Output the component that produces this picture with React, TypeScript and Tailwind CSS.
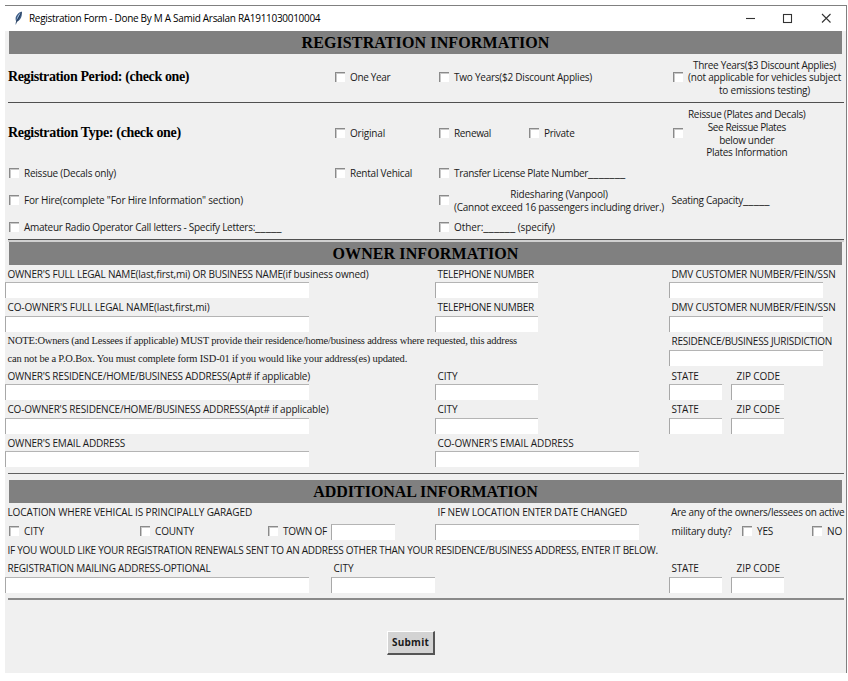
import type { ReactNode } from "react";

function Label({ children, t = "tracking-[-0.2px]", className = "" }: { children: ReactNode; t?: string; className?: string }) {
  return <div className={`whitespace-nowrap ${className.includes("leading-") ? "" : "leading-[12.6px]"} ${t} ${className}`}>{children}</div>;
}

function Box() {
  return <span className="mb-[2px] block h-[10px] w-[10px] shrink-0 border-t border-l border-[#8a8a8a] bg-white shadow-[inset_1px_1px_0_#c9c9c9]" />;
}

function Check({ children, t = "tracking-[-0.2px]", className = "" }: { children: ReactNode; t?: string; className?: string }) {
  return (
    <label className={`flex items-center gap-[5px] pl-1 ${className}`}>
      <Box />
      <Label t={t} className="text-center">{children}</Label>
    </label>
  );
}

function Blank({ n }: { n: string }) {
  return <span className="text-[12px] leading-none tracking-[0.08px]">{n}</span>;
}

function Field({ w }: { w: string }) {
  return <input className={`block h-4 border-t border-l border-t-[#b4b4b4] border-l-[#a8a8a8] bg-white px-1 outline-none ${w}`} />;
}

function Heading({ children, t }: { children: ReactNode; t: string }) {
  return (
    <h2 className={`mr-[4px] ml-[4px] flex h-[23px] items-center justify-center bg-[#808080] font-['Liberation_Serif',serif] text-[16px] font-bold text-black ${t}`}>
      {children}
    </h2>
  );
}

const cols = "grid grid-cols-[326px_104px_234px_62px_1fr]";

function Row({ h, children }: { h: string; children: ReactNode }) {
  return <div className={`${cols} ${h} items-center`}>{children}</div>;
}

function Rule({ c }: { c: string }) {
  return <div className={`mr-[2px] ml-[3px] ${c}`} />;
}

export default function App() {
  return (
    <div className="h-[681px] w-[848px] overflow-hidden bg-white pt-[5px] pl-[5px] font-['Open_Sans','Noto_Sans',sans-serif] text-[10px] text-[#1a1a1a]">
      <div className="flex h-[668px] w-[842px] flex-col border-t border-r border-[#808080] bg-[#f0f0f0]">
        <header className="flex h-[25px] shrink-0 items-center bg-white pl-[9px]">
          <svg width="9" height="14" viewBox="0 0 9 14" className="-mt-px mr-[6px] shrink-0">
            <path d="M7.6 0.6C4.6 1.4 1.8 4.6 1.6 7.4c-.1 1.2.1 2 .6 2.8L1.4 13.4l.7-.1.8-2.6C5.6 10 7.2 7.2 7.7 4.6 8 3 8 1.6 7.6.6z" fill="#3d5c85" />
            <path d="M7 1.4C4.8 2.8 3 5.4 2.5 9.4 3.8 7 5.6 4.6 7 1.4z" fill="#a9c4e4" />
            <path d="M7.4 1.2C6 5 4 8 2.2 11.6" stroke="#16263c" strokeWidth=".7" fill="none" />
          </svg>
          <Label t="tracking-[-0.3px]" className="text-black">Registration Form - Done By M A Samid Arsalan RA1911030010004</Label>
          <svg width="88" height="12" viewBox="0 0 88 12" className="-mt-[2px] mr-[13px] ml-auto shrink-0" fill="none" stroke="#333" strokeWidth="1.1">
            <path d="M1 6.5h9" />
            <rect x="38.500" y="2.500" width="8" height="8" />
            <path d="M77 2l8.500 8.500M85.500 2L77 10.500" />
          </svg>
        </header>

        <Heading t="tracking-[0.12px]">REGISTRATION INFORMATION</Heading>
        <Row h="h-[47px]">
          <Label t="tracking-[-0.38px]" className="pl-[3px] font-['Liberation_Serif',serif] text-[14px] font-bold text-black">Registration Period: (check one)</Label>
          <Check t="tracking-[-0.35px]">One Year</Check>
          <Check t="tracking-[-0.24px]">Two Years($2 Discount Applies)</Check>
          <Check className="col-span-2">
            <span className="tracking-[-0.308px]">Three Years($3 Discount Applies)</span><br />
            <span className="tracking-[-0.207px]">(not applicable for vehicles subject</span><br />
            <span className="tracking-[-0.223px]">to emissions testing)</span>
          </Check>
        </Row>
        <Rule c="mt-px h-px bg-[#505050]" />
        <Row h="h-[61px]">
          <Label t="tracking-[-0.33px]" className="pl-[3px] font-['Liberation_Serif',serif] text-[14px] font-bold text-black">Registration Type: (check one)</Label>
          <Check t="tracking-[-0.195px]">Original</Check>
          <div className="flex">
            <Check t="tracking-[-0.338px]" className="w-[90px]">Renewal</Check>
            <Check t="tracking-[-0.265px]">Private</Check>
          </div>
          <Check className="col-span-2">
            <span className="tracking-[-0.301px]">Reissue (Plates and Decals)</span><br />
            <span className="tracking-[-0.419px]">See Reissue Plates</span><br />
            <span className="tracking-[-0.337px]">below under</span><br />
            <span className="tracking-[-0.282px]">Plates Information</span>
          </Check>
        </Row>
        <Row h="h-[19px]">
          <Check t="tracking-[-0.232px]">Reissue (Decals only)</Check>
          <Check t="tracking-[-0.233px]">Rental Vehical</Check>
          <Check t="tracking-[-0.331px]">Transfer License Plate Number<Blank n="_______" /></Check>
        </Row>
        <Row h="h-[35px]">
          <Check t="tracking-[-0.203px]" className="col-span-2">For Hire(complete "For Hire Information" section)</Check>
          <Check>
            <span className="tracking-[-0.209px]">Ridesharing (Vanpool)</span><br />
            <span className="tracking-[-0.26px]">(Cannot exceed 16 passengers including driver.)</span>
          </Check>
          <Label t="tracking-[-0.3px]" className="col-span-2 pl-[2.500px]">Seating Capacity<Blank n="_____" /></Label>
        </Row>
        <Row h="h-[19px]">
          <Check t="tracking-[-0.273px]" className="col-span-2">Amateur Radio Operator Call letters - Specify Letters:<Blank n="_____" /></Check>
          <Check t="tracking-[-0.1px]">Other:<Blank n="______" /> (specify)</Check>
        </Row>
        <div className="h-[2px] shrink-0" />
        <Rule c="h-px bg-[#505050]" />
        <Rule c="h-[2px] bg-[#d0d0d0]" />

        <Heading t="tracking-[0.11px]">OWNER INFORMATION</Heading>
        <Row h="h-[17px] pt-px">
          <Label t="tracking-[-0.201px]" className="col-span-2 pl-[2.500px]">OWNER'S FULL LEGAL NAME(last,first,mi) OR BUSINESS NAME(if business owned)</Label>
          <Label t="tracking-[-0.262px]" className="pl-[2.500px]">TELEPHONE NUMBER</Label>
          <Label t="tracking-[-0.191px]" className="col-span-2 pl-[2.500px]">DMV CUSTOMER NUMBER/FEIN/SSN</Label>
        </Row>
        <Row h="h-4">
          <div className="col-span-2"><Field w="w-[304px]" /></div>
          <Field w="w-[103px]" />
          <div className="col-span-2"><Field w="w-[154px]" /></div>
        </Row>
        <Row h="h-[18px] pt-px">
          <Label t="tracking-[-0.134px]" className="col-span-2 pl-[2.500px]">CO-OWNER'S FULL LEGAL NAME(last,first,mi)</Label>
          <Label t="tracking-[-0.262px]" className="pl-[2.500px]">TELEPHONE NUMBER</Label>
          <Label t="tracking-[-0.191px]" className="col-span-2 pl-[2.500px]">DMV CUSTOMER NUMBER/FEIN/SSN</Label>
        </Row>
        <Row h="h-4">
          <div className="col-span-2"><Field w="w-[304px]" /></div>
          <Field w="w-[103px]" />
          <div className="col-span-2"><Field w="w-[154px]" /></div>
        </Row>
        <div className="grid h-[35px] grid-cols-[664px_1fr]">
          <div className="pl-[2.500px] font-['Liberation_Serif',serif] text-[10.5px]">
            <Label t="tracking-[-0.2px]" className="leading-[18px]">NOTE:Owners (and Lessees if applicable) MUST provide their residence/home/business address where requested, this address</Label>
            <Label t="tracking-[-0.168px]" className="leading-[18px]">can not be a P.O.Box. You must complete form ISD-01 if you would like your address(es) updated.</Label>
          </div>
          <div>
            <Label t="tracking-[-0.272px]" className="pl-[2.500px] leading-[18px]">RESIDENCE/BUSINESS JURISDICTION</Label>
            <Field w="w-[154px]" />
          </div>
        </div>
        <Row h="h-[17px] pt-px">
          <Label t="tracking-[-0.21px]" className="col-span-2 pl-[2.500px]">OWNER'S RESIDENCE/HOME/BUSINESS ADDRESS(Apt# if applicable)</Label>
          <Label t="tracking-[-0.05px]" className="pl-[2.500px]">CITY</Label>
          <Label t="tracking-[-0.276px]" className="pl-[2.500px]">STATE</Label>
          <Label t="tracking-[-0.065px]" className="pl-[5.500px]">ZIP CODE</Label>
        </Row>
        <Row h="h-4">
          <div className="col-span-2"><Field w="w-[304px]" /></div>
          <Field w="w-[103px]" />
          <Field w="w-[53px]" />
          <Field w="w-[53px]" />
        </Row>
        <Row h="h-[18px] pt-px">
          <Label t="tracking-[-0.18px]" className="col-span-2 pl-[2.500px]">CO-OWNER'S RESIDENCE/HOME/BUSINESS ADDRESS(Apt# if applicable)</Label>
          <Label t="tracking-[-0.05px]" className="pl-[2.500px]">CITY</Label>
          <Label t="tracking-[-0.276px]" className="pl-[2.500px]">STATE</Label>
          <Label t="tracking-[-0.065px]" className="pl-[5.500px]">ZIP CODE</Label>
        </Row>
        <Row h="h-4">
          <div className="col-span-2"><Field w="w-[304px]" /></div>
          <Field w="w-[103px]" />
          <Field w="w-[53px]" />
          <Field w="w-[53px]" />
        </Row>
        <Row h="h-[17px] pt-px">
          <Label t="tracking-[-0.193px]" className="col-span-2 pl-[2.500px]">OWNER'S EMAIL ADDRESS</Label>
          <Label t="tracking-[-0.119px]" className="pl-[2.500px]">CO-OWNER'S EMAIL ADDRESS</Label>
        </Row>
        <Row h="h-4">
          <div className="col-span-2"><Field w="w-[304px]" /></div>
          <Field w="w-[204px]" />
        </Row>
        <div className="h-[6px] shrink-0" />
        <Rule c="mb-[6px] h-px bg-[#606060]" />

        <Heading t="tracking-[-0.03px]">ADDITIONAL INFORMATION</Heading>
        <Row h="h-[19px]">
          <Label t="tracking-[-0.123px]" className="col-span-2 pl-[2.500px]">LOCATION WHERE VEHICAL IS PRINCIPALLY GARAGED</Label>
          <Label t="tracking-[-0.164px]" className="pl-[2.500px]">IF NEW LOCATION ENTER DATE CHANGED</Label>
          <Label t="tracking-[-0.27px]" className="col-span-2 pl-[2px]">Are any of the owners/lessees on active</Label>
        </Row>
        <Row h="h-[19px]">
          <div className="col-span-2 flex items-center">
            <Check t="tracking-[-0.05px]" className="w-[131px]">CITY</Check>
            <Check t="tracking-[-0.166px]" className="w-[128px]">COUNTY</Check>
            <Check t="tracking-[-0.227px]" className="w-[67px]">TOWN OF</Check>
            <Field w="w-[64px]" />
          </div>
          <Field w="w-[204px]" />
          <div className="col-span-2 flex items-center">
            <Label t="tracking-[-0.199px]" className="w-[69px] pl-[2.500px]">military duty?</Label>
            <Check t="tracking-[-0.21px]" className="w-[70px]">YES</Check>
            <Check t="tracking-[-0.154px]">NO</Check>
          </div>
        </Row>
        <Row h="h-[19px]">
          <Label t="tracking-[-0.264px]" className="col-span-5 pl-[2.500px]">IF YOU WOULD LIKE YOUR REGISTRATION RENEWALS SENT TO AN ADDRESS OTHER THAN YOUR RESIDENCE/BUSINESS ADDRESS, ENTER IT BELOW.</Label>
        </Row>
        <Row h="h-[17px]">
          <Label t="tracking-[-0.21px]" className="pl-[2.500px]">REGISTRATION MAILING ADDRESS-OPTIONAL</Label>
          <Label t="tracking-[-0.05px]" className="col-span-2 pl-[2.500px]">CITY</Label>
          <Label t="tracking-[-0.276px]" className="pl-[2.500px]">STATE</Label>
          <Label t="tracking-[-0.065px]" className="pl-[5.500px]">ZIP CODE</Label>
        </Row>
        <Row h="h-4">
          <Field w="w-[304px]" />
          <div className="col-span-2"><Field w="w-[104px]" /></div>
          <Field w="w-[53px]" />
          <Field w="w-[53px]" />
        </Row>
        <div className="h-[5px] shrink-0" />
        <Rule c="h-[2px] bg-[#8a8a8a]" />
        <button className="mt-[31px] ml-[382px] flex h-[24px] w-[48px] shrink-0 items-center justify-center border-t border-r-2 border-b-2 border-l border-t-white border-r-[#555] border-b-[#555] border-l-white bg-[#d3d3d3] text-[10px] font-bold tracking-[0.23px] text-[#1a1a1a]">
          Submit
        </button>
      </div>
    </div>
  );
}
